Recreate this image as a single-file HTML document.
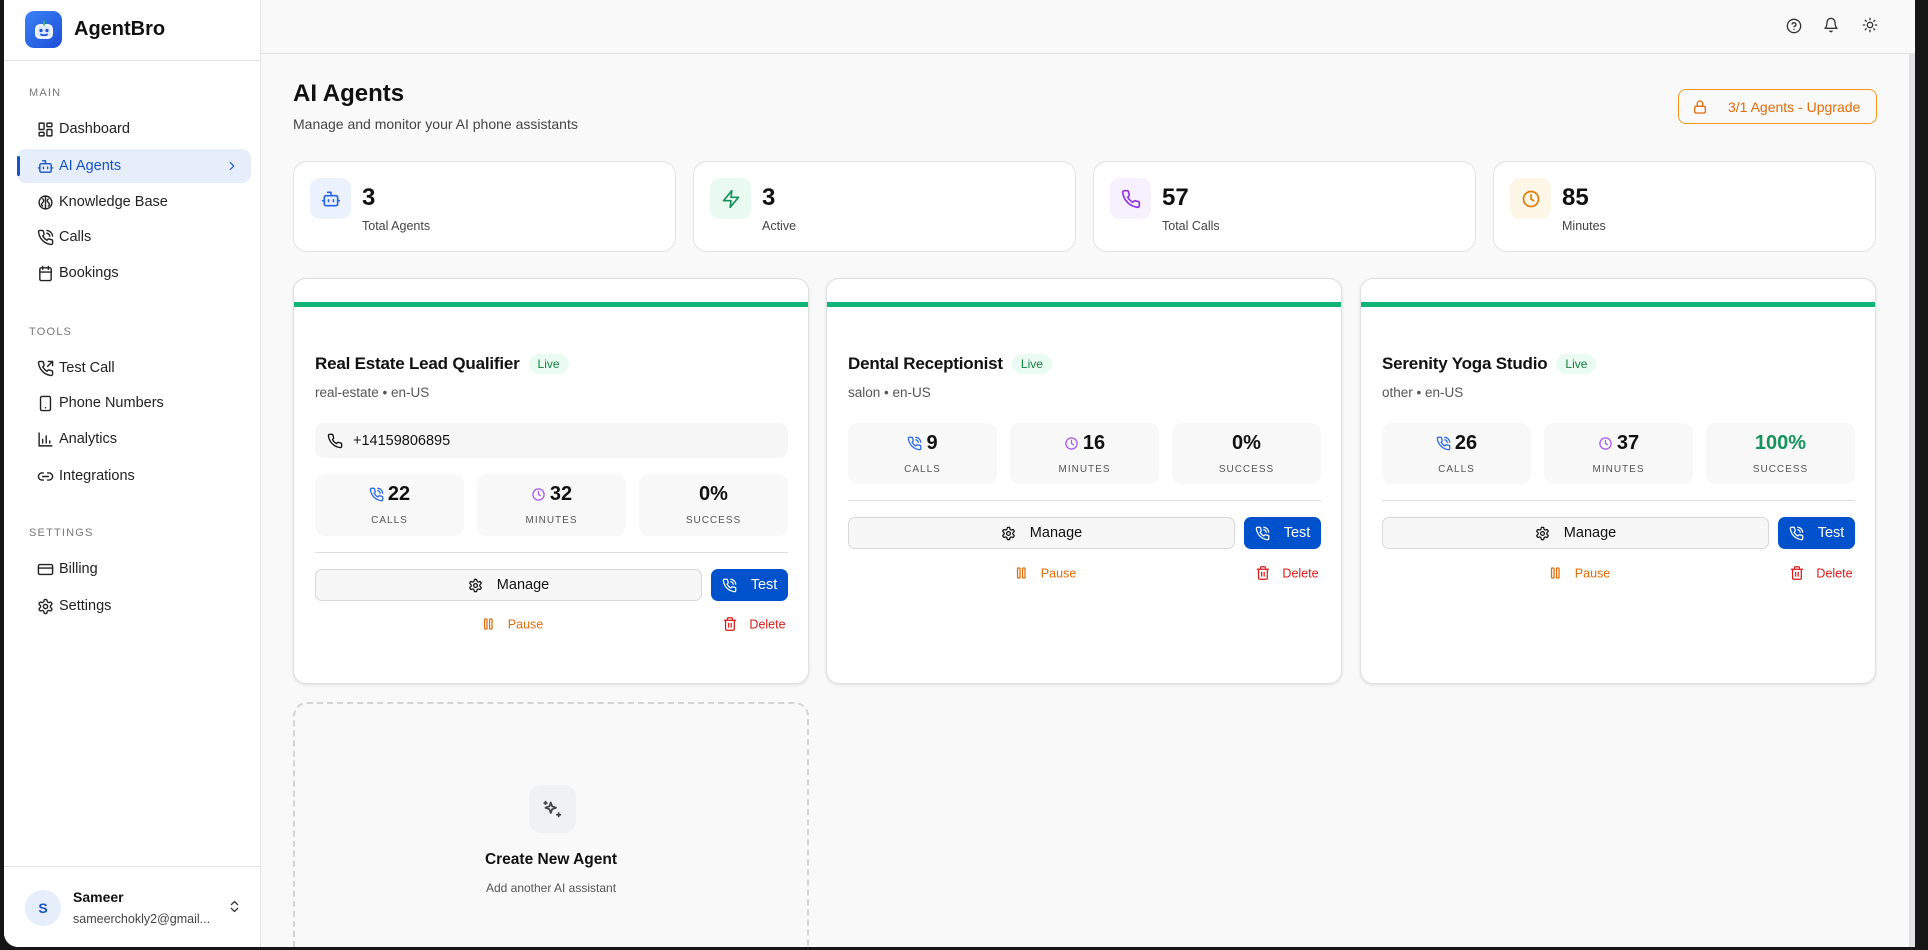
<!DOCTYPE html>
<html><head><meta charset="utf-8"><style>
*{box-sizing:border-box;margin:0;padding:0}
body{width:1928px;height:950px;background:#161616;font-family:"Liberation Sans",sans-serif;color:#111;overflow:hidden;position:relative}
.app{position:absolute;left:4px;top:0;width:1911px;height:947px;background:#f9f9f9;border-bottom-left-radius:14px;overflow:hidden}
.sb{position:absolute;left:0;top:0;width:257px;height:947px;background:#fff;border-right:1px solid #e3e3e3}
.abs{position:absolute}
.sec{position:absolute;left:25px;font-size:11px;letter-spacing:1.2px;color:#777}
.nav{position:absolute;left:13px;width:234px;height:34px;display:flex;align-items:center;font-size:14.5px;color:#222}
.nav svg{position:absolute;left:20px;width:17px;height:17px}
.nav span{position:absolute;left:42px}
svg{fill:none;stroke:currentColor;stroke-width:2;stroke-linecap:round;stroke-linejoin:round}
.stat{position:absolute;top:161px;width:383px;height:91px;background:#fff;border:1px solid #e2e2e2;border-radius:14px}
.stat .ib{position:absolute;left:16px;top:16px;width:41px;height:41px;border-radius:10px;display:flex;align-items:center;justify-content:center}
.stat .ib svg{width:20px;height:20px}
.stat .n{position:absolute;left:68px;top:22px;font-size:24px;font-weight:600}
.stat .l{position:absolute;left:68px;top:57px;font-size:12.5px;color:#444}
.card{position:absolute;top:278px;width:516px;height:406px;background:#fff;border:1px solid #e0e0e0;border-radius:13px;box-shadow:0 1px 3px rgba(0,0,0,.1);overflow:hidden}
.bar{position:absolute;left:0;right:0;top:23px;height:5px;background:#10b575}
.ttl{position:absolute;left:21px;top:75px;font-size:17px;font-weight:600;display:flex;align-items:center;gap:9px;letter-spacing:-0.2px}
.live{font-size:12px;font-weight:400;color:#15803d;background:#eafbf1;border-radius:10px;padding:3px 9px;letter-spacing:0}
.sub{position:absolute;left:21px;top:106px;font-size:13.5px;color:#555}
.ph{position:absolute;left:21px;top:144px;width:473px;height:35px;background:#f6f6f6;border-radius:9px;font-size:14.5px;display:flex;align-items:center}
.ph svg{width:16px;height:16px;margin:0 10px 0 12px}
.sx{position:absolute;width:149px;height:62px;background:#f8f8f8;border-radius:10px;text-align:center}
.sx .v{position:absolute;top:9px;left:0;right:0;font-size:20px;font-weight:600;display:flex;justify-content:center;align-items:center;gap:4px}
.sx .v svg{width:15px;height:15px}
.sx .k{position:absolute;top:41px;left:0;right:0;font-size:10px;letter-spacing:1px;color:#555}
.dv{position:absolute;left:21px;width:473px;height:1px;background:#ddd}
.mg{position:absolute;left:21px;width:387px;height:32px;border:1px solid #d8d8d8;background:#f7f7f7;border-radius:7px;display:flex;align-items:center;justify-content:center;font-size:14.5px;gap:14px}
.mg svg,.ts svg{width:15px;height:15px}
.ts{position:absolute;left:417px;width:77px;height:32px;background:#0052cc;border-radius:7px;color:#fff;display:flex;align-items:center;justify-content:center;font-size:14.5px;gap:14px}
.pa{position:absolute;font-size:12.5px;color:#e06c0a;display:flex;align-items:center;gap:12px;transform:translate(-50%,-50%)}
.de{position:absolute;font-size:12.5px;color:#dc1a1a;display:flex;align-items:center;gap:12px;transform:translate(-50%,-50%)}
.pa svg,.de svg{width:15px;height:15px}
</style></head><body>
<div class="app">
<div class="sb">
  <div class="abs" style="left:21px;top:11px;width:37px;height:37px;border-radius:9px;background:linear-gradient(135deg,#3b82f6,#1d4ed8);display:flex;align-items:center;justify-content:center">
    <svg viewBox="0 0 24 24" style="width:24px;height:24px;stroke:#fff;stroke-width:1.8"><rect x="4" y="7" width="16" height="13" rx="4" fill="#dbeafe" stroke="#fff"/><circle cx="9" cy="12.5" r="1.6" fill="#1d4ed8" stroke="none"/><circle cx="15" cy="12.5" r="1.6" fill="#1d4ed8" stroke="none"/><path d="M9 16.5c1.5 1 4.5 1 6 0" stroke="#1d4ed8"/><path d="M12 7V3.5" stroke="#22c55e"/></svg>
  </div>
  <div class="abs" style="left:70px;top:18px;font-size:20px;font-weight:700">AgentBro</div>
  <div class="abs" style="left:0;top:60px;width:257px;height:1px;background:#e3e3e3"></div>

  <div class="sec" style="top:87px">MAIN</div>
  <div class="nav" style="top:112px"><svg viewBox="0 0 24 24"><rect x="3" y="3" width="7" height="9" rx="1"/><rect x="14" y="3" width="7" height="5" rx="1"/><rect x="14" y="12" width="7" height="9" rx="1"/><rect x="3" y="16" width="7" height="5" rx="1"/></svg><span>Dashboard</span></div>
  <div class="nav" style="top:149px;background:#e6eefb;border-radius:9px;color:#1554c8"><div class="abs" style="left:0;top:7px;width:3px;height:20px;background:#1554c8;border-radius:2px"></div><svg viewBox="0 0 24 24"><path d="M12 8V4H8"/><rect x="4" y="8" width="16" height="12" rx="2"/><path d="M2 14h2M20 14h2M15 13v2M9 13v2"/></svg><span>AI Agents</span><svg viewBox="0 0 24 24" style="left:208px;width:14px;height:14px"><path d="m9 18 6-6-6-6"/></svg></div>
  <div class="nav" style="top:185px"><svg viewBox="0 0 24 24"><circle cx="12" cy="12" r="9"/><path d="M12 3v18M8 7c2 1 2 3 0 5s-2 4 0 5M16 7c-2 1-2 3 0 5s2 4 0 5"/></svg><span>Knowledge Base</span></div>
  <div class="nav" style="top:220px"><svg viewBox="0 0 24 24"><path d="M22 16.92v3a2 2 0 0 1-2.180 2 19.79 19.79 0 0 1-8.63-3.07 19.5 19.5 0 0 1-6-6 19.79 19.79 0 0 1-3.07-8.67A2 2 0 0 1 4.11 2h3a2 2 0 0 1 2 1.72 12.84 12.84 0 0 0 .7 2.81 2 2 0 0 1-.45 2.11L8.09 9.91a16 16 0 0 0 6 6l1.27-1.27a2 2 0 0 1 2.11-.45 12.84 12.84 0 0 0 2.81.7A2 2 0 0 1 22 16.92z"/><path d="M14.05 2a9 9 0 0 1 8 7.94M14.05 6A5 5 0 0 1 18 10"/></svg><span>Calls</span></div>
  <div class="nav" style="top:256px"><svg viewBox="0 0 24 24"><rect x="4" y="4" width="16" height="18" rx="2"/><path d="M16 2v4M8 2v4M4 10h16"/></svg><span>Bookings</span></div>

  <div class="sec" style="top:326px">TOOLS</div>
  <div class="nav" style="top:351px"><svg viewBox="0 0 24 24"><path d="M22 16.92v3a2 2 0 0 1-2.18 2 19.79 19.79 0 0 1-8.63-3.07 19.5 19.5 0 0 1-6-6 19.79 19.79 0 0 1-3.07-8.67A2 2 0 0 1 4.11 2h3a2 2 0 0 1 2 1.72 12.84 12.84 0 0 0 .7 2.81 2 2 0 0 1-.45 2.11L8.09 9.91a16 16 0 0 0 6 6l1.27-1.27a2 2 0 0 1 2.11-.45 12.84 12.84 0 0 0 2.81.7A2 2 0 0 1 22 16.92z"/><path d="M16 2h6v6M22 2l-7 7"/></svg><span>Test Call</span></div>
  <div class="nav" style="top:386px"><svg viewBox="0 0 24 24"><rect x="5" y="2" width="14" height="20" rx="2"/><path d="M12 18h.01"/></svg><span>Phone Numbers</span></div>
  <div class="nav" style="top:422px"><svg viewBox="0 0 24 24"><path d="M3 3v18h18M8 17v-5M13 17V7M18 17v-3"/></svg><span>Analytics</span></div>
  <div class="nav" style="top:459px"><svg viewBox="0 0 24 24"><path d="M9 17H7A5 5 0 0 1 7 7h2M15 7h2a5 5 0 1 1 0 10h-2M8 12h8"/></svg><span>Integrations</span></div>

  <div class="sec" style="top:527px">SETTINGS</div>
  <div class="nav" style="top:552px"><svg viewBox="0 0 24 24"><rect x="2" y="5" width="20" height="14" rx="2"/><path d="M2 10h20"/></svg><span>Billing</span></div>
  <div class="nav" style="top:589px"><svg viewBox="0 0 24 24"><path d="M12.22 2h-.44a2 2 0 0 0-2 2v.18a2 2 0 0 1-1 1.73l-.43.25a2 2 0 0 1-2 0l-.15-.08a2 2 0 0 0-2.73.73l-.22.38a2 2 0 0 0 .73 2.73l.15.1a2 2 0 0 1 1 1.72v.51a2 2 0 0 1-1 1.74l-.15.09a2 2 0 0 0-.73 2.73l.22.38a2 2 0 0 0 2.73.73l.15-.08a2 2 0 0 1 2 0l.43.25a2 2 0 0 1 1 1.73V20a2 2 0 0 0 2 2h.44a2 2 0 0 0 2-2v-.18a2 2 0 0 1 1-1.73l.43-.25a2 2 0 0 1 2 0l.15.08a2 2 0 0 0 2.73-.73l.22-.39a2 2 0 0 0-.73-2.73l-.15-.08a2 2 0 0 1-1-1.74v-.5a2 2 0 0 1 1-1.74l.15-.09a2 2 0 0 0 .73-2.73l-.22-.38a2 2 0 0 0-2.73-.73l-.15.08a2 2 0 0 1-2 0l-.43-.25a2 2 0 0 1-1-1.73V4a2 2 0 0 0-2-2z"/><circle cx="12" cy="12" r="3"/></svg><span>Settings</span></div>

  <div class="abs" style="left:0;top:866px;width:257px;height:1px;background:#e3e3e3"></div>
  <div class="abs" style="left:21px;top:890px;width:36px;height:36px;border-radius:50%;background:#e6eefb;color:#1554c8;font-size:14px;font-weight:600;display:flex;align-items:center;justify-content:center">S</div>
  <div class="abs" style="left:69px;top:889px;font-size:14px;font-weight:600">Sameer</div>
  <div class="abs" style="left:69px;top:912px;font-size:12.5px;color:#444">sameerchokly2@gmail...</div>
  <svg viewBox="0 0 24 24" class="abs" style="left:223px;top:899px;width:15px;height:15px;color:#333"><path d="m7 15 5 5 5-5M7 9l5-5 5 5"/></svg>
</div>

<div class="abs" style="left:257px;top:53px;width:1654px;height:1px;background:#e0e0e0"></div>
<svg viewBox="0 0 24 24" class="abs" style="left:1782px;top:18px;width:16px;height:16px;color:#333"><circle cx="12" cy="12" r="10"/><path d="M9.1 9a3 3 0 0 1 5.8 1c0 2-3 3-3 3M12 17h.01"/></svg>
<svg viewBox="0 0 24 24" class="abs" style="left:1819px;top:17px;width:16px;height:16px;color:#333"><path d="M6 8a6 6 0 0 1 12 0c0 7 3 9 3 9H3s3-2 3-9M10.3 21a1.94 1.94 0 0 0 3.4 0"/></svg>
<svg viewBox="0 0 24 24" class="abs" style="left:1858px;top:17px;width:16px;height:16px;color:#333"><circle cx="12" cy="12" r="4"/><path d="M12 2v2M12 20v2M4.93 4.93l1.41 1.41M17.66 17.66l1.41 1.41M2 12h2M20 12h2M6.34 17.66l-1.41 1.41M19.07 4.93l-1.41 1.41"/></svg>
<div class="abs" style="left:1905px;top:54px;width:6px;height:893px;background:#e2e2e4"></div>

<div class="abs" style="left:289px;top:80px;font-size:24px;font-weight:600">AI Agents</div>
<div class="abs" style="left:289px;top:116px;font-size:14px;color:#444">Manage and monitor your AI phone assistants</div>
<div class="abs" style="left:1674px;top:89px;width:199px;height:35px;border:1.5px solid #f59520;border-radius:8px;color:#e06c0a;font-size:14px;display:flex;align-items:center">
  <svg viewBox="0 0 24 24" style="width:16px;height:16px;margin-left:13px;margin-right:20px"><rect x="4" y="11" width="16" height="10" rx="2"/><path d="M8 11V7a4 4 0 0 1 8 0v4"/></svg>3/1 Agents - Upgrade</div>

<div class="stat" style="left:289px"><div class="ib" style="background:#ebf2fe;color:#2563eb"><svg viewBox="0 0 24 24"><path d="M12 8V4H8"/><rect x="4" y="8" width="16" height="12" rx="2"/><path d="M2 14h2M20 14h2M15 13v2M9 13v2"/></svg></div><div class="n">3</div><div class="l">Total Agents</div></div>
<div class="stat" style="left:689px"><div class="ib" style="background:#e9fbf1;color:#16935a"><svg viewBox="0 0 24 24"><path d="M13 2 3 14h9l-1 8 10-12h-9l1-8z"/></svg></div><div class="n">3</div><div class="l">Active</div></div>
<div class="stat" style="left:1089px"><div class="ib" style="background:#f7f0fe;color:#9333ea"><svg viewBox="0 0 24 24"><path d="M22 16.92v3a2 2 0 0 1-2.18 2 19.79 19.79 0 0 1-8.63-3.07 19.5 19.5 0 0 1-6-6 19.79 19.79 0 0 1-3.07-8.67A2 2 0 0 1 4.11 2h3a2 2 0 0 1 2 1.72 12.84 12.84 0 0 0 .7 2.81 2 2 0 0 1-.45 2.11L8.09 9.91a16 16 0 0 0 6 6l1.27-1.27a2 2 0 0 1 2.11-.45 12.84 12.84 0 0 0 2.81.7A2 2 0 0 1 22 16.92z"/></svg></div><div class="n">57</div><div class="l">Total Calls</div></div>
<div class="stat" style="left:1489px"><div class="ib" style="background:#fef6e6;color:#e07a0a"><svg viewBox="0 0 24 24"><circle cx="12" cy="12" r="9"/><path d="M12 7v5l3 2"/></svg></div><div class="n">85</div><div class="l">Minutes</div></div>

<div class="card" style="left:289px">
  <div class="bar"></div>
  <div class="ttl">Real Estate Lead Qualifier<span class="live">Live</span></div>
  <div class="sub">real-estate • en-US</div>
  <div class="ph"><svg viewBox="0 0 24 24"><path d="M22 16.92v3a2 2 0 0 1-2.18 2 19.79 19.79 0 0 1-8.63-3.07 19.5 19.5 0 0 1-6-6 19.79 19.79 0 0 1-3.07-8.67A2 2 0 0 1 4.11 2h3a2 2 0 0 1 2 1.72 12.84 12.84 0 0 0 .7 2.81 2 2 0 0 1-.45 2.11L8.09 9.91a16 16 0 0 0 6 6l1.27-1.27a2 2 0 0 1 2.11-.45 12.84 12.84 0 0 0 2.81.7A2 2 0 0 1 22 16.92z"/></svg>+14159806895</div>
  <div class="sx" style="left:21px;top:195px"><div class="v"><svg viewBox="0 0 24 24" style="color:#2563eb"><path d="M22 16.92v3a2 2 0 0 1-2.18 2 19.79 19.79 0 0 1-8.63-3.07 19.5 19.5 0 0 1-6-6 19.79 19.79 0 0 1-3.07-8.67A2 2 0 0 1 4.11 2h3a2 2 0 0 1 2 1.72 12.84 12.84 0 0 0 .7 2.81 2 2 0 0 1-.45 2.11L8.09 9.91a16 16 0 0 0 6 6l1.27-1.27a2 2 0 0 1 2.11-.45 12.84 12.84 0 0 0 2.81.7A2 2 0 0 1 22 16.92z"/><path d="M14.05 2a9 9 0 0 1 8 7.94M14.05 6A5 5 0 0 1 18 10"/></svg>22</div><div class="k">CALLS</div></div>
  <div class="sx" style="left:183px;top:195px"><div class="v"><svg viewBox="0 0 24 24" style="color:#a855f7"><circle cx="12" cy="12" r="9"/><path d="M12 7v5l3 2"/></svg>32</div><div class="k">MINUTES</div></div>
  <div class="sx" style="left:345px;top:195px"><div class="v">0%</div><div class="k">SUCCESS</div></div>
  <div class="dv" style="top:273px"></div>
  <div class="mg" style="top:290px"><svg viewBox="0 0 24 24"><path d="M12.22 2h-.44a2 2 0 0 0-2 2v.18a2 2 0 0 1-1 1.73l-.43.25a2 2 0 0 1-2 0l-.15-.08a2 2 0 0 0-2.73.73l-.22.38a2 2 0 0 0 .73 2.73l.15.1a2 2 0 0 1 1 1.72v.51a2 2 0 0 1-1 1.74l-.15.09a2 2 0 0 0-.73 2.73l.22.38a2 2 0 0 0 2.73.73l.15-.08a2 2 0 0 1 2 0l.43.25a2 2 0 0 1 1 1.73V20a2 2 0 0 0 2 2h.44a2 2 0 0 0 2-2v-.18a2 2 0 0 1 1-1.73l.43-.25a2 2 0 0 1 2 0l.15.08a2 2 0 0 0 2.73-.73l.22-.39a2 2 0 0 0-.73-2.73l-.15-.08a2 2 0 0 1-1-1.74v-.5a2 2 0 0 1 1-1.74l.15-.09a2 2 0 0 0 .73-2.73l-.22-.38a2 2 0 0 0-2.73-.73l-.15.08a2 2 0 0 1-2 0l-.43-.25a2 2 0 0 1-1-1.73V4a2 2 0 0 0-2-2z"/><circle cx="12" cy="12" r="3"/></svg>Manage</div>
  <div class="ts" style="top:290px"><svg viewBox="0 0 24 24"><path d="M22 16.92v3a2 2 0 0 1-2.18 2 19.79 19.79 0 0 1-8.63-3.07 19.5 19.5 0 0 1-6-6 19.79 19.79 0 0 1-3.07-8.67A2 2 0 0 1 4.11 2h3a2 2 0 0 1 2 1.72 12.84 12.84 0 0 0 .7 2.81 2 2 0 0 1-.45 2.11L8.09 9.91a16 16 0 0 0 6 6l1.27-1.27a2 2 0 0 1 2.11-.45 12.84 12.84 0 0 0 2.81.7A2 2 0 0 1 22 16.92z"/><path d="M14.05 2a9 9 0 0 1 8 7.94M14.05 6A5 5 0 0 1 18 10"/></svg>Test</div>
  <div class="pa" style="left:218px;top:345px"><svg viewBox="0 0 24 24"><rect x="6" y="4" width="4" height="16" rx="1"/><rect x="14" y="4" width="4" height="16" rx="1"/></svg>Pause</div>
  <div class="de" style="left:460px;top:345px"><svg viewBox="0 0 24 24"><path d="M3 6h18M19 6v14a2 2 0 0 1-2 2H7a2 2 0 0 1-2-2V6M8 6V4a2 2 0 0 1 2-2h4a2 2 0 0 1 2 2v2M10 11v6M14 11v6"/></svg>Delete</div>
</div>

<div class="card" style="left:822px">
  <div class="bar"></div>
  <div class="ttl">Dental Receptionist<span class="live">Live</span></div>
  <div class="sub">salon • en-US</div>
  <div class="sx" style="left:21px;top:144px;height:61px"><div class="v"><svg viewBox="0 0 24 24" style="color:#2563eb"><path d="M22 16.92v3a2 2 0 0 1-2.18 2 19.79 19.79 0 0 1-8.63-3.07 19.5 19.5 0 0 1-6-6 19.79 19.79 0 0 1-3.07-8.67A2 2 0 0 1 4.11 2h3a2 2 0 0 1 2 1.72 12.84 12.84 0 0 0 .7 2.81 2 2 0 0 1-.45 2.11L8.09 9.91a16 16 0 0 0 6 6l1.27-1.27a2 2 0 0 1 2.11-.45 12.84 12.84 0 0 0 2.81.7A2 2 0 0 1 22 16.92z"/><path d="M14.05 2a9 9 0 0 1 8 7.94M14.05 6A5 5 0 0 1 18 10"/></svg>9</div><div class="k">CALLS</div></div>
  <div class="sx" style="left:183px;top:144px;height:61px"><div class="v"><svg viewBox="0 0 24 24" style="color:#a855f7"><circle cx="12" cy="12" r="9"/><path d="M12 7v5l3 2"/></svg>16</div><div class="k">MINUTES</div></div>
  <div class="sx" style="left:345px;top:144px;height:61px"><div class="v">0%</div><div class="k">SUCCESS</div></div>
  <div class="dv" style="top:221px"></div>
  <div class="mg" style="top:238px"><svg viewBox="0 0 24 24"><path d="M12.22 2h-.44a2 2 0 0 0-2 2v.18a2 2 0 0 1-1 1.73l-.43.25a2 2 0 0 1-2 0l-.15-.08a2 2 0 0 0-2.73.73l-.22.38a2 2 0 0 0 .73 2.73l.15.1a2 2 0 0 1 1 1.72v.51a2 2 0 0 1-1 1.74l-.15.09a2 2 0 0 0-.73 2.73l.22.38a2 2 0 0 0 2.73.73l.15-.08a2 2 0 0 1 2 0l.43.25a2 2 0 0 1 1 1.73V20a2 2 0 0 0 2 2h.44a2 2 0 0 0 2-2v-.18a2 2 0 0 1 1-1.73l.43-.25a2 2 0 0 1 2 0l.15.08a2 2 0 0 0 2.73-.73l.22-.39a2 2 0 0 0-.73-2.73l-.15-.08a2 2 0 0 1-1-1.74v-.5a2 2 0 0 1 1-1.74l.15-.09a2 2 0 0 0 .73-2.73l-.22-.38a2 2 0 0 0-2.73-.73l-.15.08a2 2 0 0 1-2 0l-.43-.25a2 2 0 0 1-1-1.73V4a2 2 0 0 0-2-2z"/><circle cx="12" cy="12" r="3"/></svg>Manage</div>
  <div class="ts" style="top:238px"><svg viewBox="0 0 24 24"><path d="M22 16.92v3a2 2 0 0 1-2.18 2 19.79 19.79 0 0 1-8.63-3.07 19.5 19.5 0 0 1-6-6 19.79 19.79 0 0 1-3.07-8.67A2 2 0 0 1 4.11 2h3a2 2 0 0 1 2 1.72 12.84 12.84 0 0 0 .7 2.81 2 2 0 0 1-.45 2.11L8.09 9.91a16 16 0 0 0 6 6l1.27-1.27a2 2 0 0 1 2.11-.45 12.84 12.84 0 0 0 2.81.7A2 2 0 0 1 22 16.92z"/><path d="M14.05 2a9 9 0 0 1 8 7.94M14.05 6A5 5 0 0 1 18 10"/></svg>Test</div>
  <div class="pa" style="left:218px;top:294px"><svg viewBox="0 0 24 24"><rect x="6" y="4" width="4" height="16" rx="1"/><rect x="14" y="4" width="4" height="16" rx="1"/></svg>Pause</div>
  <div class="de" style="left:460px;top:294px"><svg viewBox="0 0 24 24"><path d="M3 6h18M19 6v14a2 2 0 0 1-2 2H7a2 2 0 0 1-2-2V6M8 6V4a2 2 0 0 1 2-2h4a2 2 0 0 1 2 2v2M10 11v6M14 11v6"/></svg>Delete</div>
</div>

<div class="card" style="left:1356px">
  <div class="bar"></div>
  <div class="ttl">Serenity Yoga Studio<span class="live">Live</span></div>
  <div class="sub">other • en-US</div>
  <div class="sx" style="left:21px;top:144px;height:61px"><div class="v"><svg viewBox="0 0 24 24" style="color:#2563eb"><path d="M22 16.92v3a2 2 0 0 1-2.18 2 19.79 19.79 0 0 1-8.63-3.07 19.5 19.5 0 0 1-6-6 19.79 19.79 0 0 1-3.07-8.67A2 2 0 0 1 4.11 2h3a2 2 0 0 1 2 1.72 12.84 12.84 0 0 0 .7 2.81 2 2 0 0 1-.45 2.11L8.09 9.91a16 16 0 0 0 6 6l1.27-1.27a2 2 0 0 1 2.11-.45 12.84 12.84 0 0 0 2.81.7A2 2 0 0 1 22 16.92z"/><path d="M14.05 2a9 9 0 0 1 8 7.94M14.05 6A5 5 0 0 1 18 10"/></svg>26</div><div class="k">CALLS</div></div>
  <div class="sx" style="left:183px;top:144px;height:61px"><div class="v"><svg viewBox="0 0 24 24" style="color:#a855f7"><circle cx="12" cy="12" r="9"/><path d="M12 7v5l3 2"/></svg>37</div><div class="k">MINUTES</div></div>
  <div class="sx" style="left:345px;top:144px;height:61px"><div class="v" style="color:#15935a">100%</div><div class="k">SUCCESS</div></div>
  <div class="dv" style="top:221px"></div>
  <div class="mg" style="top:238px"><svg viewBox="0 0 24 24"><path d="M12.22 2h-.44a2 2 0 0 0-2 2v.18a2 2 0 0 1-1 1.73l-.43.25a2 2 0 0 1-2 0l-.15-.08a2 2 0 0 0-2.73.73l-.22.38a2 2 0 0 0 .73 2.73l.15.1a2 2 0 0 1 1 1.72v.51a2 2 0 0 1-1 1.74l-.15.09a2 2 0 0 0-.73 2.73l.22.38a2 2 0 0 0 2.73.73l.15-.08a2 2 0 0 1 2 0l.43.25a2 2 0 0 1 1 1.73V20a2 2 0 0 0 2 2h.44a2 2 0 0 0 2-2v-.18a2 2 0 0 1 1-1.73l.43-.25a2 2 0 0 1 2 0l.15.08a2 2 0 0 0 2.73-.73l.22-.39a2 2 0 0 0-.73-2.73l-.15-.08a2 2 0 0 1-1-1.74v-.5a2 2 0 0 1 1-1.74l.15-.09a2 2 0 0 0 .73-2.73l-.22-.38a2 2 0 0 0-2.73-.73l-.15.08a2 2 0 0 1-2 0l-.43-.25a2 2 0 0 1-1-1.73V4a2 2 0 0 0-2-2z"/><circle cx="12" cy="12" r="3"/></svg>Manage</div>
  <div class="ts" style="top:238px"><svg viewBox="0 0 24 24"><path d="M22 16.92v3a2 2 0 0 1-2.18 2 19.79 19.79 0 0 1-8.63-3.07 19.5 19.5 0 0 1-6-6 19.79 19.79 0 0 1-3.07-8.67A2 2 0 0 1 4.11 2h3a2 2 0 0 1 2 1.72 12.84 12.84 0 0 0 .7 2.81 2 2 0 0 1-.45 2.11L8.09 9.91a16 16 0 0 0 6 6l1.27-1.27a2 2 0 0 1 2.11-.45 12.84 12.84 0 0 0 2.81.7A2 2 0 0 1 22 16.92z"/><path d="M14.05 2a9 9 0 0 1 8 7.94M14.05 6A5 5 0 0 1 18 10"/></svg>Test</div>
  <div class="pa" style="left:218px;top:294px"><svg viewBox="0 0 24 24"><rect x="6" y="4" width="4" height="16" rx="1"/><rect x="14" y="4" width="4" height="16" rx="1"/></svg>Pause</div>
  <div class="de" style="left:460px;top:294px"><svg viewBox="0 0 24 24"><path d="M3 6h18M19 6v14a2 2 0 0 1-2 2H7a2 2 0 0 1-2-2V6M8 6V4a2 2 0 0 1 2-2h4a2 2 0 0 1 2 2v2M10 11v6M14 11v6"/></svg>Delete</div>
</div>

<div class="abs" style="left:289px;top:702px;width:516px;height:245px;border:2px dashed #d4d4d4;border-bottom:none;border-radius:14px 14px 0 0"></div>
<div class="abs" style="left:525px;top:785px;width:47px;height:48px;border-radius:12px;background:#f0f1f3;display:flex;align-items:center;justify-content:center;color:#444"><svg viewBox="0 0 24 24" style="width:21px;height:21px"><path d="M10 4l1.6 4.4L16 10l-4.4 1.6L10 16l-1.6-4.4L4 10l4.4-1.6z"/><path d="M4 3v3M2.5 4.5h3M19 16v4M17 18h4"/></svg></div>
<div class="abs" style="left:289px;top:851px;width:516px;text-align:center;font-size:15.5px;font-weight:600">Create New Agent</div>
<div class="abs" style="left:289px;top:881px;width:516px;text-align:center;font-size:12px;color:#555">Add another AI assistant</div>
</div>
</body></html>
